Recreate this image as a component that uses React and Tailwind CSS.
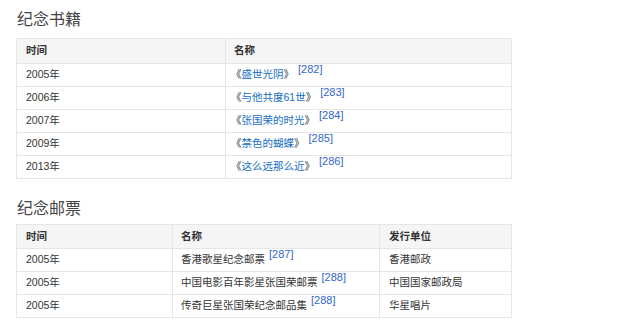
const books = [
  { year: '2005年', title: '盛世光阴', ref: '282' },
  { year: '2006年', title: '与他共度61世', ref: '283' },
  { year: '2007年', title: '张国荣的时光', ref: '284' },
  { year: '2009年', title: '禁色的蝴蝶', ref: '285' },
  { year: '2013年', title: '这么远那么近', ref: '286' },
];

const stamps = [
  { year: '2005年', name: '香港歌星纪念邮票', ref: '287', issuer: '香港邮政' },
  { year: '2005年', name: '中国电影百年影星张国荣邮票', ref: '288', issuer: '中国国家邮政局' },
  { year: '2005年', name: '传奇巨星张国荣纪念邮品集', ref: '288', issuer: '华星唱片' },
];

function Ref({ n }) {
  return (
    <sup className="relative -top-[3px] ml-[4px] align-top text-[11px] leading-none text-[#3366cc]">
      [{n}]
    </sup>
  );
}

function Heading({ children }) {
  return (
    <h2 className="pl-[17px] text-[16px] leading-[20px] text-[#444]">{children}</h2>
  );
}

export default function App() {
  return (
    <div
      className="h-[329px] w-[641px] bg-white text-[10.5px] text-[#333]"
      style={{ fontFamily: '"Liberation Sans", "Noto Sans CJK SC", sans-serif' }}
    >
      <div className="pt-[10px]">
        <Heading>纪念书籍</Heading>
        <table className="mt-[8px] ml-[16px] w-[496px] border-collapse">
          <thead>
            <tr className="h-[25px] bg-[#f5f5f5]">
              <th className="w-[209px] border border-[#e6e6e6] pl-[9px] text-left font-bold">时间</th>
              <th className="border border-[#e6e6e6] pl-[8px] text-left font-bold">名称</th>
            </tr>
          </thead>
          <tbody>
            {books.map((b) => (
              <tr key={b.year} className="h-[23px]">
                <td className="border border-[#e6e6e6] pl-[9px]">{b.year}</td>
                <td className="border border-[#e6e6e6] pl-[5px]">
                  《<a className="text-[#136ec2]">{b.title}</a>》
                  <Ref n={b.ref} />
                </td>
              </tr>
            ))}
          </tbody>
        </table>
      </div>

      <div className="pt-[20px]">
        <Heading>纪念邮票</Heading>
        <table className="mt-[5px] ml-[16px] w-[496px] border-collapse">
          <thead>
            <tr className="h-[24px] bg-[#f5f5f5]">
              <th className="w-[156px] border border-[#e6e6e6] pl-[9px] text-left font-bold">时间</th>
              <th className="w-[207px] border border-[#e6e6e6] pl-[8px] text-left font-bold">名称</th>
              <th className="border border-[#e6e6e6] pl-[9px] text-left font-bold">发行单位</th>
            </tr>
          </thead>
          <tbody>
            {stamps.map((s, i) => (
              <tr key={i} className="h-[23px]">
                <td className="border border-[#e6e6e6] pl-[9px]">{s.year}</td>
                <td className="border border-[#e6e6e6] pl-[8px]">
                  {s.name}
                  <Ref n={s.ref} />
                </td>
                <td className="border border-[#e6e6e6] pl-[9px]">{s.issuer}</td>
              </tr>
            ))}
          </tbody>
        </table>
      </div>
    </div>
  );
}
